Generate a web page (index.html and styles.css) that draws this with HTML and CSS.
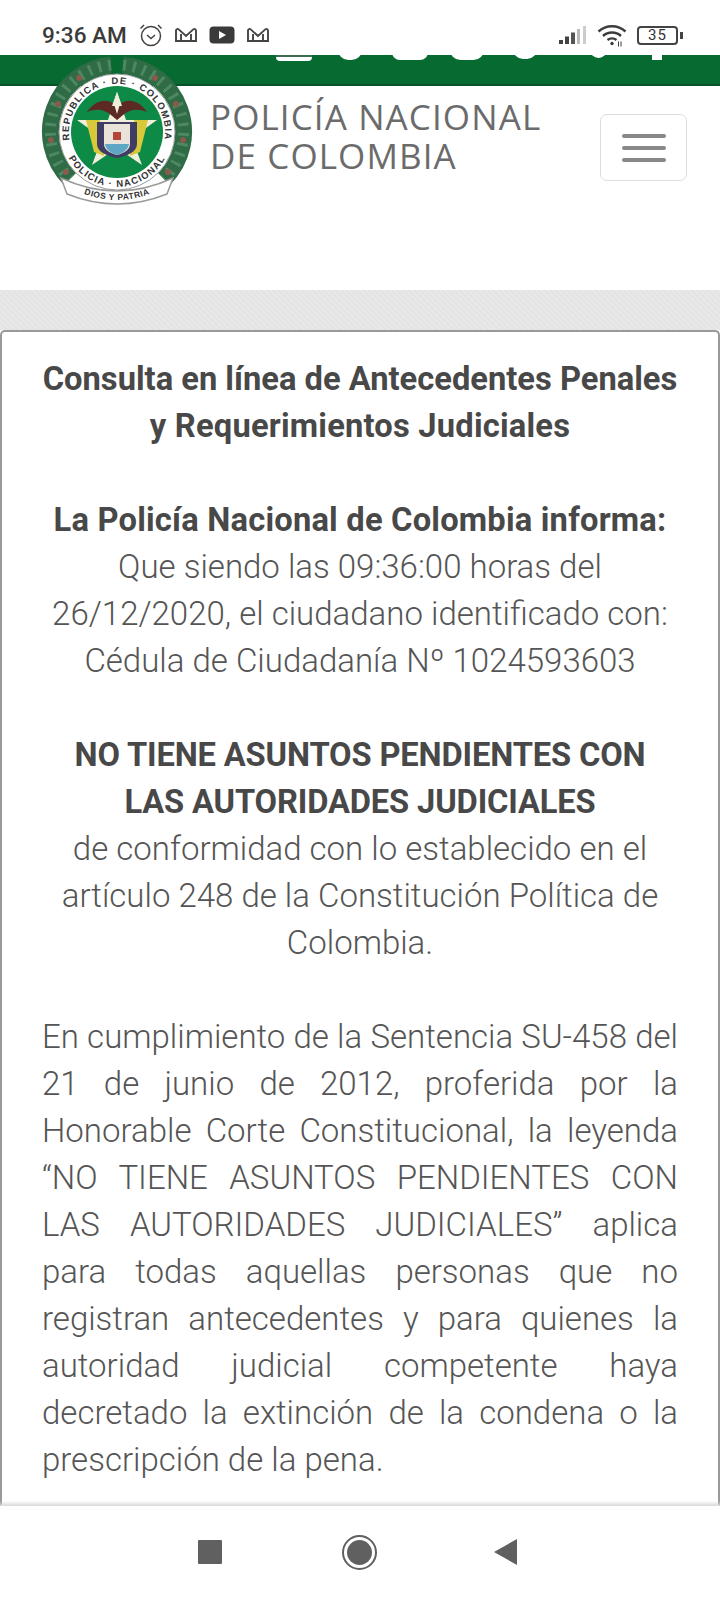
FILE: index.html
```html
<!DOCTYPE html>
<html>
<head>
	<title>Consulta de Antecedentes</title>
	<link rel="stylesheet" href="styles.css">
</head>
<body>
	<div class="status">
		<div class="status_left">
			<span class="clock">9:36 AM</span>
			<svg class="st_icon" width="24" height="24" viewBox="0 0 24 24" fill="none" stroke="#444" stroke-width="1.500"><circle cx="12" cy="13" r="9.500"/><path d="M8 12l4 3.500 4-3.500"/><path d="M1.500 5.500L5 2M22.500 5.500L19 2"/></svg>
			<svg class="st_icon" width="24" height="18" viewBox="0 0 24 18" fill="none" stroke="#444" stroke-width="1.900"><path d="M2 15V4.500C2 3 3.600 2.400 4.700 3.400L12 10l7.300-6.600C20.400 2.400 22 3 22 4.500V15zM7 15V8M17 15V8"/></svg>
			<svg class="st_icon" width="26" height="18" viewBox="0 0 26 18"><rect x="0.500" y="0.500" width="25" height="17" rx="4" fill="#3a3a3a"/><path d="M10 5l7 4-7 4z" fill="#fff"/></svg>
			<svg class="st_icon" width="24" height="18" viewBox="0 0 24 18" fill="none" stroke="#444" stroke-width="1.900"><path d="M2 15V4.500C2 3 3.600 2.400 4.700 3.400L12 10l7.300-6.600C20.400 2.400 22 3 22 4.500V15zM7 15V8M17 15V8"/></svg>
		</div>
		<div class="status_right">
			<svg width="28" height="20" viewBox="0 0 28 20"><rect x="0" y="15" width="4" height="4" fill="#444"/><rect x="6" y="11.500" width="4" height="7.500" fill="#444"/><rect x="12" y="7.500" width="4" height="11.500" fill="#555"/><rect x="18" y="4" width="3" height="15" fill="#bbb"/><rect x="24" y="1" width="3" height="18" fill="#ccc"/></svg>
			<svg width="30" height="24" viewBox="0 0 30 24" fill="none" stroke="#3c3c3c" stroke-width="2.400"><path d="M1.500 8.500C9 1.500 21 1.500 28.500 8.500"/><path d="M6 13c5-4.600 13-4.600 18 0"/><path d="M10.500 17c2.600-2 6.400-2 9 0"/><circle cx="15" cy="20.500" r="1.700" fill="#3c3c3c" stroke="none"/><path d="M21.500 18.500v5M24 18.500v5" stroke-width="1"/></svg>
			<div class="battery"><span class="batt_num">35</span></div>
			<div class="batt_tip"></div>
		</div>
	</div>

	<div class="topbar">
		<div class="social">
			<span class="soc soc_a"></span>
			<span class="soc soc_b"></span>
			<span class="soc soc_c"></span>
			<span class="soc soc_d"></span>
			<span class="soc soc_e"></span>
			<span class="soc soc_f"></span>
			<span class="soc soc_g"></span>
		</div>
	</div>

	<div class="header">
		<svg class="logo" width="152" height="152" viewBox="0 0 152 152">
			<defs>
				<path id="arc_top" d="M30.900 92.400A48 48 0 1 1 121.100 92.400"/>
				<path id="arc_bot" d="M26.200 99.200A55 55 0 0 0 125.800 99.200"/>
				<path id="arc_ban" d="M32 133Q76 155 120 133"/>
			</defs>
			<g fill="none">
				<path d="M70 9A67 67 0 0 0 29 123" stroke="#2f6b45" stroke-width="17"/>
				<path d="M82 9A67 67 0 0 1 123 123" stroke="#2f6b45" stroke-width="17"/>
				<path d="M70 9A67 67 0 0 0 29 123" stroke="#4d8763" stroke-width="11" stroke-dasharray="3 7"/>
				<path d="M82 9A67 67 0 0 1 123 123" stroke="#4d8763" stroke-width="11" stroke-dasharray="3 7"/>
			</g>
			<g fill="#8a5a4a">
				<circle cx="38" cy="22" r="3"/><circle cx="114" cy="22" r="3"/>
				<circle cx="17" cy="48" r="3"/><circle cx="135" cy="48" r="3"/>
				<circle cx="10" cy="84" r="3"/><circle cx="142" cy="84" r="3"/>
				<circle cx="25" cy="116" r="3"/><circle cx="127" cy="116" r="3"/>
			</g>
			<circle cx="76" cy="76" r="58" fill="#fff" stroke="#999" stroke-width="1"/>
			<text class="logo_txt"><textPath href="#arc_top" startOffset="50%" text-anchor="middle">REPUBLICA · DE · COLOMBIA</textPath></text>
			<text class="logo_txt"><textPath href="#arc_bot" startOffset="50%" text-anchor="middle">POLICIA · NACIONAL</textPath></text>
			<circle cx="76" cy="76" r="46" fill="#0d8a45"/>
			<path d="M76 36l9 28h31l-25 18 10 27-25-17-25 17 10-27-25-18h31z" fill="#f1efdc"/>
			<path d="M45 64h14l4 36-10-4zM107 64H93l-4 36 10-4z" fill="#d8c93a"/>
			<path d="M46 56c8-12 20-14 27-8l3 10 3-10c7-6 19-4 27 8-10-4-18-2-24 3l-6 5-6-5c-6-5-14-7-24-3z" fill="#5c2a22"/>
			<path d="M76 36l5 14h-10z" fill="#f1efdc"/>
			<path d="M56 66h40v22c0 8-10 12-20 14-10-2-20-6-20-14z" fill="#3f3d63"/>
			<path d="M63 68h26v20c0 6-6 9-13 11-7-2-13-5-13-11z" fill="#e8e4da"/>
			<path d="M64 88h24c-1 6-6 9-12 11-6-2-11-5-12-11z" fill="#5ea7c4"/>
			<path d="M72 76h8v8h-8z" fill="#b5443a"/>
			<path d="M20 122Q76 148 132 122L126 138Q76 158 26 138z" fill="#fff" stroke="#999" stroke-width="1.500"/>
			<text class="logo_txt logo_ban"><textPath href="#arc_ban" startOffset="50%" text-anchor="middle">DIOS Y PATRIA</textPath></text>
		</svg>
		<div class="brand">POLICÍA NACIONAL<br>DE COLOMBIA</div>
		<div class="toggler">
			<span class="tog_bar"></span>
			<span class="tog_bar"></span>
			<span class="tog_bar"></span>
		</div>
	</div>

	<div class="band"></div>

	<div class="card">
		<p class="center"><strong>Consulta en línea de Antecedentes Penales<br><span class="wide">y Requerimientos Judiciales</span></strong></p>
		<p class="center"><strong class="wide">La Policía Nacional de Colombia informa:</strong><br>Que siendo las 09:36:00 horas del<br>26/12/2020, el ciudadano identificado con:<br>Cédula de Ciudadanía Nº 1024593603</p>
		<p class="center"><strong class="narrow">NO TIENE ASUNTOS PENDIENTES CON<br>LAS AUTORIDADES JUDICIALES</strong><br>de conformidad con lo establecido en el<br>artículo 248 de la Constitución Política de<br>Colombia.</p>
		<p class="just">En cumplimiento de la Sentencia SU-458 del 21 de junio de 2012, proferida por la Honorable Corte Constitucional, la leyenda “NO TIENE ASUNTOS PENDIENTES CON LAS AUTORIDADES JUDICIALES” aplica para todas aquellas personas que no registran antecedentes y para quienes la autoridad judicial competente haya decretado la extinción de la condena o la prescripción de la pena.</p>
	</div>

	<div class="navbar">
		<div class="nav_square"></div>
		<div class="nav_circle"><div class="nav_dot"></div></div>
		<div class="nav_back"></div>
	</div>
</body>
</html>
```
FILE: styles.css
```css
html, body {
	margin: 0;
	padding: 0;
}
body {
	width: 720px;
	height: 1600px;
	overflow: hidden;
	position: relative;
	background-color: white;
	font-family: "Roboto", "Liberation Sans", sans-serif;
}

.status {
	height: 55px;
	display: flex;
	justify-content: space-between;
	align-items: flex-end;
	padding: 0 37px 7px 42px;
	box-sizing: border-box;
}
.status_left, .status_right {
	display: flex;
	align-items: center;
	height: 26px;
}
.clock {
	font-size: 22.600px;
	font-weight: 500;
	color: #3b3b3b;
	margin-right: 12px;
}
.st_icon {
	margin-right: 11px;
}
.status_right svg {
	margin-right: 10px;
}
.battery {
	width: 37px;
	height: 15px;
	border: 2px solid #444;
	border-radius: 4px;
	display: flex;
	align-items: center;
	justify-content: center;
}
.batt_num {
	font-size: 15px;
	color: #333;
	letter-spacing: 1px;
}
.batt_tip {
	width: 3px;
	height: 7px;
	margin-left: 2px;
	background-color: #444;
}

.topbar {
	height: 31px;
	background-color: #076b31;
	border-bottom: 2px solid #06532a;
	box-sizing: border-box;
	overflow: hidden;
}
.social {
	display: flex;
	height: 6px;
}
.soc {
	display: block;
	background-color: white;
	position: relative;
	top: -16px;
	height: 22px;
	border-radius: 8px;
}
.soc_a {
	width: 36px;
	margin-left: 276px;
	border-radius: 4px;
	background-image: linear-gradient(to bottom, transparent 16px, #3f6b52 16px, #3f6b52 18px, transparent 18px);
}
.soc_b {
	width: 24px;
	margin-left: 26px;
	border-radius: 12px;
	height: 21px;
}
.soc_c {
	width: 36px;
	margin-left: 30px;
	height: 21px;
}
.soc_d {
	width: 34px;
	margin-left: 22px;
	border-radius: 14px;
	height: 21px;
}
.soc_e {
	width: 24px;
	margin-left: 29px;
	border-radius: 12px;
	height: 20px;
}
.soc_f {
	width: 17px;
	margin-left: 53px;
	border-radius: 9px;
	height: 19px;
}
.soc_g {
	width: 10px;
	margin-left: 45px;
	border-radius: 0;
	height: 21px;
}

.header {
	height: 204px;
	display: flex;
	align-items: flex-start;
	padding-left: 210px;
	padding-right: 33px;
	box-sizing: border-box;
}
.logo {
	position: absolute;
	left: 41px;
	top: 56px;
}
.logo_txt {
	font-family: "Liberation Sans", sans-serif;
	font-size: 9.500px;
	font-weight: bold;
	fill: #333;
	letter-spacing: 1.200px;
}
.logo_ban {
	font-size: 8.500px;
	letter-spacing: 0.500px;
}
.brand {
	font-family: "Open Sans", "DejaVu Sans", sans-serif;
	font-size: 35px;
	line-height: 39px;
	letter-spacing: 1.100px;
	color: #6b6b6b;
	margin-top: 11px;
	flex: 1;
}
.toggler {
	width: 87px;
	height: 67px;
	border: 1.500px solid #ddd;
	border-radius: 7px;
	margin-top: 28px;
	box-sizing: border-box;
	display: flex;
	flex-direction: column;
	align-items: center;
	justify-content: center;
	gap: 8px;
}
.tog_bar {
	display: block;
	width: 44px;
	height: 4px;
	border-radius: 2px;
	background-color: #888;
}

.band {
	height: 40px;
	background-color: #e6e6e6;
	background-image: repeating-linear-gradient(45deg, #e4e4e4 0, #e4e4e4 2px, #e8e8e8 2px, #e8e8e8 4px);
}

.card {
	height: 1175px;
	box-sizing: border-box;
	border: 2px solid #999;
	border-bottom: none;
	border-radius: 5px 5px 0 0;
	padding: 23px 40px 0 40px;
	background-color: white;
	font-size: 33px;
	line-height: 47px;
	font-weight: 300;
	color: #555;
}
.card p {
	margin: 0 0 47px 0;
}
.card strong {
	font-size: 32.700px;
	line-height: 1;
	font-weight: 700;
	color: #484848;
}
.wide {
	letter-spacing: 0.200px;
}
.narrow {
	letter-spacing: -0.150px;
}
.center {
	text-align: center;
}
.just {
	text-align: justify;
}

.navbar {
	height: 95px;
	background-color: white;
	border-top: 1px solid #ddd;
	box-shadow: 0 -2px 3px #ddd;
	box-sizing: border-box;
	display: flex;
	align-items: center;
	justify-content: center;
	padding-bottom: 2px;
	padding-right: 5px;
}
.nav_square {
	width: 24px;
	height: 24px;
	border-radius: 1px;
	background-color: #606060;
	margin-right: 120px;
}
.nav_circle {
	width: 31px;
	height: 31px;
	border: 2px solid #606060;
	border-radius: 50%;
	display: flex;
	align-items: center;
	justify-content: center;
	margin-right: 117px;
}
.nav_dot {
	width: 25px;
	height: 25px;
	border-radius: 50%;
	background-color: #606060;
}
.nav_back {
	width: 0;
	height: 0;
	border-top: 13.500px solid transparent;
	border-bottom: 13.500px solid transparent;
	border-right: 23px solid #606060;
}
```
